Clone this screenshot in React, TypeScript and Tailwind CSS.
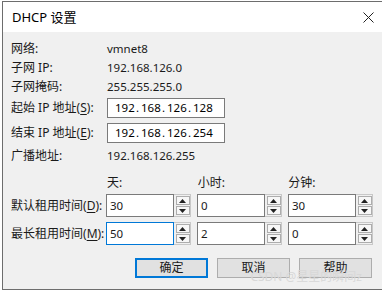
const font = { fontFamily: '"Noto Sans", "Noto Sans CJK SC", sans-serif' };

function Key({ k }: { k: string }) {
  return (
    <span>
      (<span className="underline underline-offset-2">{k}</span>):
    </span>
  );
}

function IpBox({ parts }: { parts: string[] }) {
  return (
    <div className="w-[118px] h-[20px] border border-[#7a7a7a] bg-white flex items-center pl-[7px] text-[11.5px] leading-none text-black">
      {parts.map((p, i) => (
        <span key={i} className="flex">
          {i > 0 && <span className="w-[7px] text-center">.</span>}
          <span className="w-[19px]">{p}</span>
        </span>
      ))}
    </div>
  );
}

function Tri({ up }: { up?: boolean }) {
  return (
    <svg width="7" height="4" viewBox="0 0 7 4">
      <path d={up ? "M0 4 L3.5 0 L7 4 Z" : "M0 0 L3.5 4 L7 0 Z"} fill="#222" />
    </svg>
  );
}

function Spin({ value, focus }: { value: string; focus?: boolean }) {
  return (
    <div className="w-[85px] h-[23px] flex">
      <div
        className={`w-[68px] h-full bg-white border flex items-center pl-[3px] text-[11.5px] leading-none ${
          focus ? "border-[#0078d7]" : "border-[#7a7a7a]"
        }`}
      >
        {value}
      </div>
      <div className="flex-1 h-full border border-[#c8c8c8] border-l-0 bg-[#f0f0f0] flex flex-col justify-center items-center gap-[1px] pl-[1px]">
        <div className="w-[14px] h-[9px] border border-[#adadad] bg-[#f7f7f7] flex items-center justify-center">
          <Tri up />
        </div>
        <div className="w-[14px] h-[9px] border border-[#adadad] bg-[#f7f7f7] flex items-center justify-center">
          <Tri />
        </div>
      </div>
    </div>
  );
}

function Btn({ label, primary }: { label: string; primary?: boolean }) {
  return (
    <div
      className={`w-[73px] h-[20px] flex items-center justify-center bg-[#e1e1e1] text-[12px] leading-none ${
        primary ? "border-2 border-[#0078d7]" : "border border-[#adadad]"
      }`}
    >
      {label}
    </div>
  );
}

export default function App() {
  return (
    <div className="w-[382px] h-[292px] bg-white overflow-hidden pl-[2px] pt-[1px] text-[#1a1a1a]" style={font}>
      <div className="h-[289px] border-l border-t border-b border-[#6d6d6d] flex flex-col">
        <div className="h-[30px] bg-white flex items-center justify-between pl-[9px] pr-[8px]">
          <span className="text-[13px] leading-none text-black">DHCP 设置</span>
          <svg width="11" height="11" viewBox="0 0 11 11">
            <path d="M0.5 0.5 L10.5 10.5 M10.5 0.5 L0.5 10.5" stroke="#222" strokeWidth="1" />
          </svg>
        </div>
        <div className="flex-1 bg-[#f0f0f0] pl-[8px] pr-[9px] pt-[7px] text-[12px] leading-none relative">
          <div className="flex items-center h-[19px]">
            <span className="w-[96px]">网络:</span>
            <span className="text-[11.5px]">vmnet8</span>
          </div>
          <div className="flex items-center h-[19px]">
            <span className="w-[96px]">子网 IP:</span>
            <span className="text-[11.5px]">192.168.126.0</span>
          </div>
          <div className="flex items-center h-[19px]">
            <span className="w-[96px]">子网掩码:</span>
            <span className="text-[11.5px]">255.255.255.0</span>
          </div>
          <div className="flex items-center mt-[2px]">
            <span className="w-[96px]">
              起始 IP 地址<Key k="S" />
            </span>
            <IpBox parts={["192", "168", "126", "128"]} />
          </div>
          <div className="flex items-center mt-[5px]">
            <span className="w-[96px]">
              结束 IP 地址<Key k="E" />
            </span>
            <IpBox parts={["192", "168", "126", "254"]} />
          </div>
          <div className="flex items-center h-[19px] mt-[3px]">
            <span className="w-[96px]">广播地址:</span>
            <span className="text-[11.5px]">192.168.126.255</span>
          </div>
          <div className="flex items-center h-[18px] mt-[9px] pl-[96px] gap-[6px]">
            <span className="w-[85px]">天:</span>
            <span className="w-[85px]">小时:</span>
            <span className="w-[85px]">分钟:</span>
          </div>
          <div className="flex items-center mt-[2px]">
            <span className="w-[96px]">
              默认租用时间<Key k="D" />
            </span>
            <div className="flex gap-[6px]">
              <Spin value="30" />
              <Spin value="0" />
              <Spin value="30" />
            </div>
          </div>
          <div className="flex items-center mt-[5px]">
            <span className="w-[96px]">
              最长租用时间<Key k="M" />
            </span>
            <div className="flex gap-[6px]">
              <Spin value="50" focus />
              <Spin value="2" />
              <Spin value="0" />
            </div>
          </div>
          <div className="flex justify-end gap-[9px] mt-[13px] pr-[1px]">
            <Btn label="确定" primary />
            <Btn label="取消" />
            <Btn label="帮助" />
          </div>
          <span className="absolute right-[20px] bottom-[6px] text-[12px] leading-none text-[#d8d8d8]">
            CSDN @星星的瞬间z
          </span>
        </div>
      </div>
    </div>
  );
}
